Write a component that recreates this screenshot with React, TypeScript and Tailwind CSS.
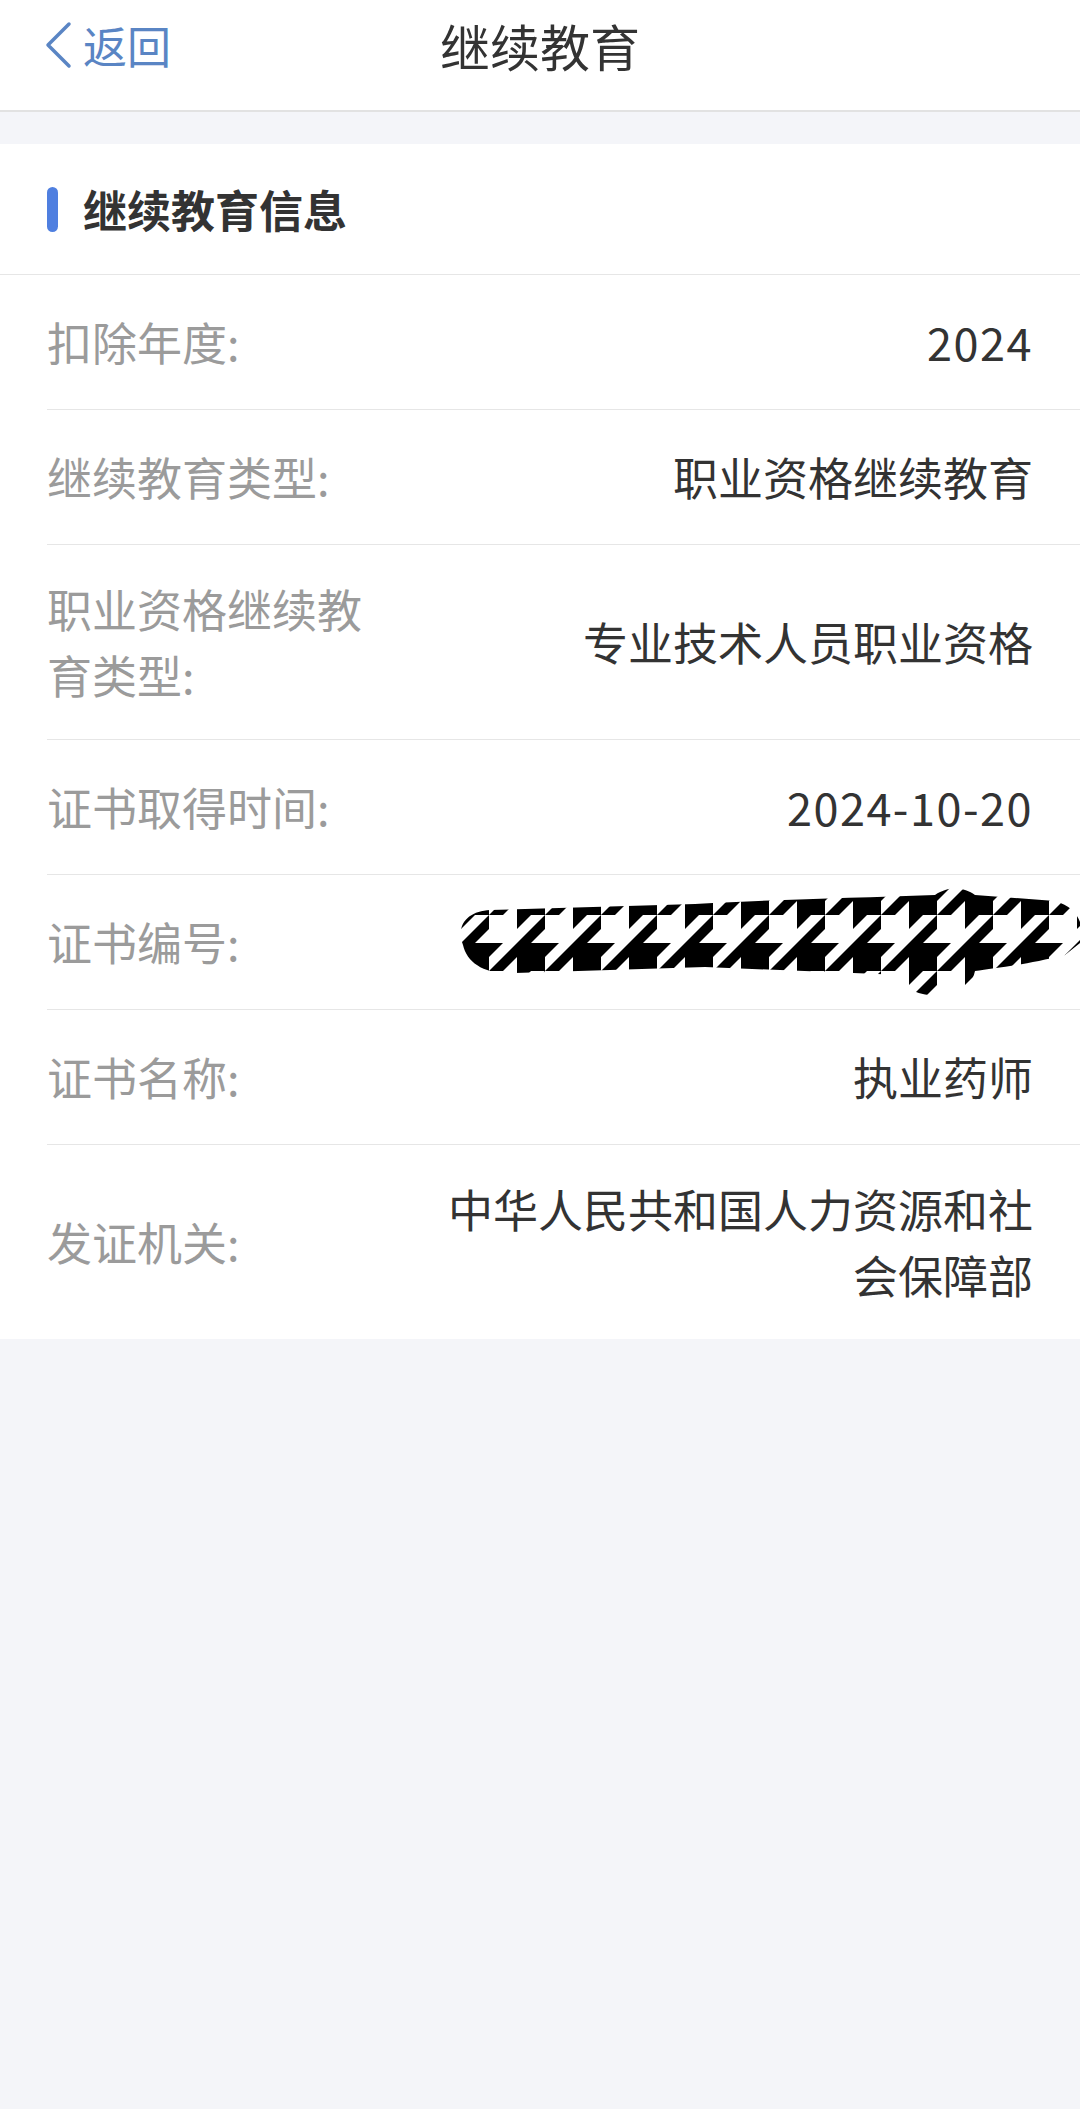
import React from 'react';

const rows: { label: string; value?: string; redacted?: boolean; num?: boolean }[] = [
  { label: '扣除年度:', value: '2024', num: true },
  { label: '继续教育类型:', value: '职业资格继续教育' },
  { label: '职业资格继续教育类型:', value: '专业技术人员职业资格' },
  { label: '证书取得时间:', value: '2024-10-20', num: true },
  { label: '证书编号:', redacted: true },
  { label: '证书名称:', value: '执业药师' },
  { label: '发证机关:', value: '中华人民共和国人力资源和社会保障部' },
];

function Scribble() {
  return (
    <svg
      className="absolute right-0 top-[8px]"
      width="625"
      height="118"
      viewBox="0 0 625 118"
    >
      <defs>
        <pattern id="tooth" width="56" height="56" patternUnits="userSpaceOnUse" patternTransform="translate(6 4)">
          <rect width="56" height="56" fill="#fff" />
          <rect x="0" y="0" width="28" height="28" fill="#000" />
          <polygon points="28,0 42,0 28,14" fill="#000" />
          <polygon points="56,0 56,14 42,28 28,28" fill="#000" />
          <polygon points="0,28 0,42 14,28" fill="#000" />
          <polygon points="0,56 14,56 28,42 28,28" fill="#000" />
        </pattern>
        <clipPath id="blob">
          <path d="M8 62 C0 40 15 28 35 27 L240 21 C330 16 400 15 480 12 C495 2 510 5 520 12 L600 18 C625 25 630 45 625 60 L610 72 C570 82 540 85 520 88 C515 108 505 114 490 112 C460 114 450 105 447 92 L250 84 L60 90 C30 92 12 80 8 62 Z" />
        </clipPath>
      </defs>
      <rect width="625" height="118" fill="url(#tooth)" clipPath="url(#blob)" />
    </svg>
  );
}

export default function App() {
  return (
    <div
      className="min-h-screen bg-[#f4f5f9]"
      style={{ fontFamily: '"Noto Sans CJK SC", "Noto Sans", sans-serif' }}
    >
      {/* Header */}
      <header className="h-[112px] bg-white border-b-2 border-[#e2e2e2]">
        <div className="relative flex items-center justify-center h-[90px]">
          <button className="absolute left-[43px] top-0 h-[90px] flex items-center gap-[10px] text-[#5a85c4]">
            <svg width="30" height="48" viewBox="0 0 30 48" fill="none">
              <path d="M26 3 L5 24 L26 45" stroke="currentColor" strokeWidth="3.5" strokeLinecap="round" strokeLinejoin="round" />
            </svg>
            <span className="text-[44px] leading-none">返回</span>
          </button>
          <h1 className="text-[50px] leading-none text-[#333333]">继续教育</h1>
        </div>
      </header>

      {/* Card */}
      <section className="mt-[32px] bg-white">
        <div className="h-[131px] flex items-center pl-[47px] border-b border-[#e6e6e6]">
          <span className="w-[11px] h-[45px] rounded-full bg-[#4f7fe0]" />
          <h2 className="ml-[25px] text-[44px] font-bold leading-none text-[#333333]">继续教育信息</h2>
        </div>

        {rows.map((row, i) => (
          <div key={row.label} className="pl-[47px]">
            <div
              className={`relative flex items-center justify-between min-h-[135px] py-[31px] pr-[47px] ${
                i === rows.length - 1 ? '' : 'border-b border-[#e6e6e6]'
              }`}
            >
              <div className="w-[330px] shrink-0 text-[45px] leading-[66px] text-[#9b9b9b]">{row.label}</div>
              <div
                className={`ml-[56px] flex-1 text-right text-[45px] leading-[66px] text-[#333333] ${
                  row.num ? 'tracking-[1.5px]' : ''
                }`}
              >
                {row.value}
              </div>
              {row.redacted && <Scribble />}
            </div>
          </div>
        ))}
      </section>
    </div>
  );
}
